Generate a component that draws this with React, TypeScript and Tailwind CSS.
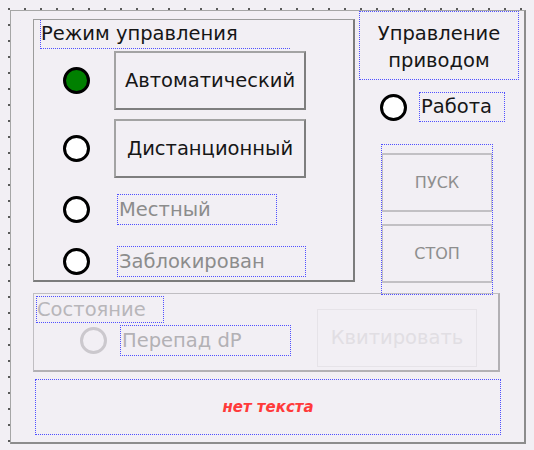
const font = "font-['DejaVu_Sans',sans-serif]";

const Radio = ({ on, dim }: { on?: boolean; dim?: boolean }) => (
  <div
    className={
      "w-[27px] h-[27px] shrink-0 rounded-full border-[3px] " +
      (dim ? "border-[#cbc8cd] bg-transparent" : on ? "border-black bg-[#008000]" : "border-black bg-white")
    }
  />
);

const Btn = ({ label }: { label: string }) => (
  <div className="w-[192px] h-[59px] flex items-center justify-center border-2 border-t-[#a3a3a3] border-l-[#a3a3a3] border-r-[#7e7e7e] border-b-[#7e7e7e] text-[19.5px] text-[#161616]">
    {label}
  </div>
);

const Tag = ({ label, w }: { label: string; w: string }) => (
  <div className={`${w} h-[31px] flex items-center pl-[1px] border border-dotted border-[#5050ff] text-[19.5px] text-[#8c8c8c]`}>
    {label}
  </div>
);

export default function App() {
  return (
    <div
      className={`${font} w-[534px] h-[450px] pt-[10px] pl-[10px] bg-[#f2eff4] bg-[radial-gradient(circle,#5a5a5a_0.9px,transparent_1.2px)] bg-[length:16px_16px] bg-[position:1px_1px] leading-none`}
    >
      <div className="w-[516px] h-[434px] bg-[#f2eff4] border-l border-t border-[#a6a6a6] border-r-2 border-b-2 border-r-[#8c8c8c] border-b-[#8c8c8c] flex flex-col">
        {/* top row */}
        <div className="flex items-start h-[282px]">
          {/* Режим управления */}
          <div className="ml-[22px] mt-[8px] w-[322px] h-[263px] border-l border-t border-[#9c9c9c] border-r-2 border-b-2 border-r-[#7c7c7c] border-b-[#7c7c7c] flex flex-col">
            <div className="ml-[6px] w-[250px] h-[29px] flex items-center border-l border-b border-dotted border-[#5050ff] text-[19.5px] text-[#161616]">
              Режим управления
            </div>
            <div className="flex items-center mt-[2px]">
              <div className="w-[80px] pl-[29px]"><Radio on /></div>
              <Btn label="Автоматический" />
            </div>
            <div className="flex items-center mt-[9px]">
              <div className="w-[80px] pl-[29px]"><Radio /></div>
              <Btn label="Дистанционный" />
            </div>
            <div className="flex items-center mt-[16px]">
              <div className="w-[83px] pl-[29px]"><Radio /></div>
              <Tag label="Местный" w="w-[160px]" />
            </div>
            <div className="flex items-center mt-[21px]">
              <div className="w-[83px] pl-[29px]"><Radio /></div>
              <Tag label="Заблокирован" w="w-[189px]" />
            </div>
          </div>

          {/* Управление приводом */}
          <div className="ml-[4px] w-[160px] flex flex-col">
            <div className="h-[69px] pt-[2px] flex flex-col items-center justify-center border border-dotted border-[#5050ff] text-[19.5px] text-[#161616] leading-[27px] text-center">
              <span>Управление</span>
              <span>приводом</span>
            </div>
            <div className="flex items-center mt-[12px] ml-[21px]">
              <div className="w-[27px] h-[27px] rounded-full border-[3px] border-black bg-white" />
              <div className="ml-[12px] w-[86px] h-[30px] flex items-center pl-[1px] border border-dotted border-[#5050ff] text-[19.5px] text-[#161616]">
                Работа
              </div>
            </div>
            <div className="mt-[22px] ml-[22px] w-[112px] h-[151px] border border-dotted border-[#5050ff] flex flex-col pt-[8px]">
              <div className="h-[59px] flex items-center justify-center border-y-2 border-x border-[#c2c0c4] text-[16px] text-[#8e8e8e]">
                ПУСК
              </div>
              <div className="mt-[12px] h-[59px] flex items-center justify-center border-y-2 border-x border-[#c2c0c4] text-[16px] text-[#8e8e8e]">
                СТОП
              </div>
            </div>
          </div>
        </div>

        {/* Состояние */}
        <div className="ml-[22px] w-[467px] h-[79px] border-l border-t border-[#c0bec2] border-r-2 border-b-2 border-r-[#b2b0b4] border-b-[#b2b0b4] flex items-start">
          <div className="w-[257px] flex flex-col">
            <div className="ml-[2px] mt-[2px] w-[128px] h-[27px] flex items-center border border-dotted border-[#5050ff] text-[19.5px] text-[#b8b6ba]">
              Состояние
            </div>
            <div className="flex items-center mt-[2px] pl-[46px]">
              <Radio dim />
              <div className="ml-[13px] w-[171px] h-[31px] flex items-center pl-[1px] border border-dotted border-[#5050ff] text-[19.5px] text-[#b3b1b5]">
                Перепад dP
              </div>
            </div>
          </div>
          <div className="ml-[26px] mt-[15px] w-[160px] h-[58px] flex items-center justify-center border border-[#e6e3e8] text-[19.5px] text-[#e1dee3]">
            Квитировать
          </div>
        </div>

        {/* status text */}
        <div className="ml-[24px] mt-[7px] w-[466px] h-[56px] flex items-center justify-center border border-dotted border-[#5050ff]">
          <span className="italic font-bold text-[15px] text-[#ff3a3a]">нет текста</span>
        </div>
      </div>
    </div>
  );
}
